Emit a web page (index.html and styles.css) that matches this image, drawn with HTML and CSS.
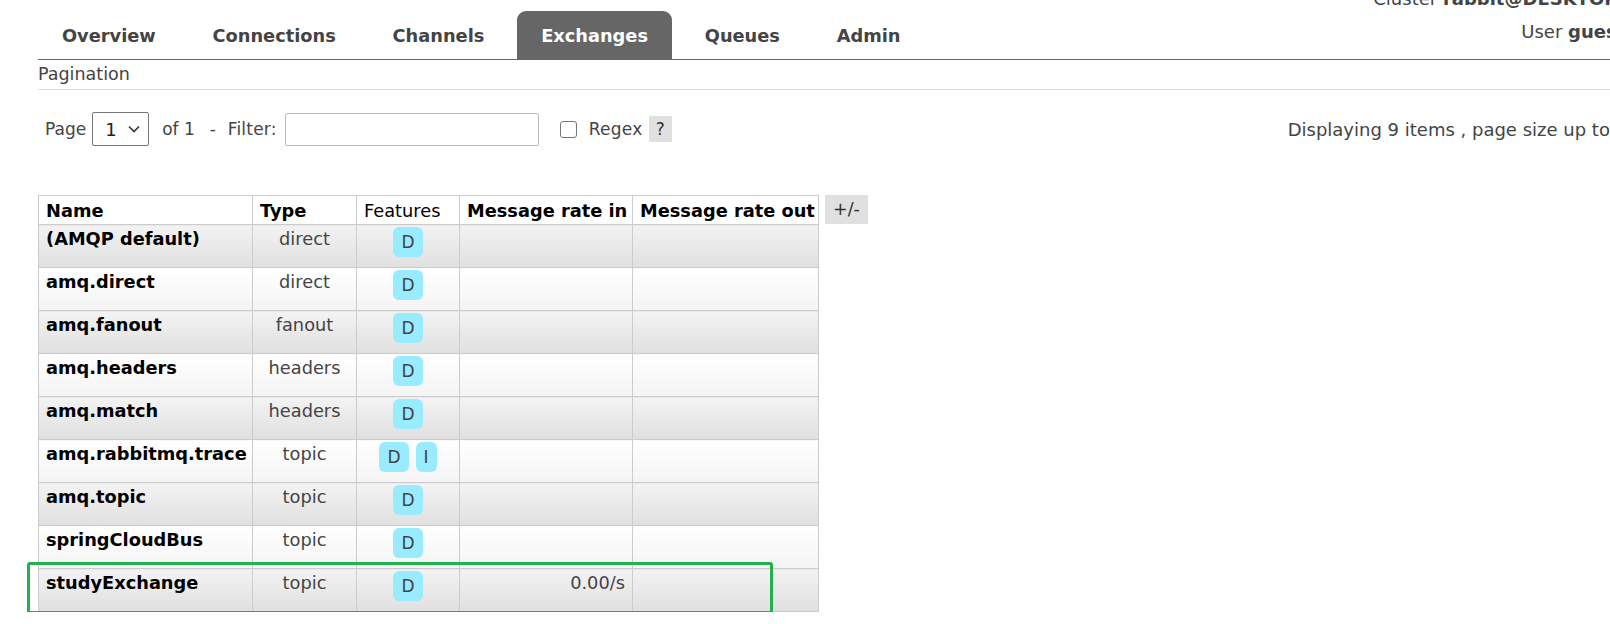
FILE: index.html
```html
<!DOCTYPE html>
<html>
<head>
  <title>RabbitMQ Management - Exchanges</title>
  <link rel="stylesheet" href="styles.css">
</head>
<body>
  <div class="page">
    <!-- top navigation -->
    <div class="topbar">
      <ul class="tabs">
        <li><a>Overview</a></li>
        <li><a>Connections</a></li>
        <li><a>Channels</a></li>
        <li class="active"><a>Exchanges</a></li>
        <li><a>Queues</a></li>
        <li><a>Admin</a></li>
      </ul>
      <div class="topinfo">
        <div class="cluster">Cluster <b>rabbit@DESKTOP-4NQ8GRL</b></div>
        <div class="user">User <b>guest</b></div>
      </div>
    </div>

    <h2 class="section">Pagination</h2>

    <div class="pager">
      <span class="lbl">Page</span>
      <span class="select">1
        <svg width="14" height="10" viewBox="0 0 14 10"><path d="M2 2.5 L7 7.5 L12 2.5" fill="none" stroke="#333" stroke-width="1.6"/></svg>
      </span>
      <span class="lbl of">of 1</span>
      <span class="lbl filter">- Filter:</span>
      <span class="input"></span>
      <span class="check"></span>
      <span class="lbl regex">Regex</span>
      <span class="help">?</span>
      <span class="count">Displaying 9 items , page size up to 100</span>
    </div>

    <div class="list-wrap">
      <table class="list">
        <colgroup>
          <col class="c-name"><col class="c-type"><col class="c-feat"><col class="c-in"><col class="c-out">
        </colgroup>
        <thead>
          <tr>
            <th>Name</th>
            <th>Type</th>
            <th class="plain">Features</th>
            <th>Message rate in</th>
            <th>Message rate out</th>
          </tr>
        </thead>
        <tbody>
          <tr class="alt1"><td class="name">(AMQP default)</td><td class="type">direct</td><td class="feat"><span class="badge">D</span></td><td></td><td></td></tr>
          <tr class="alt2"><td class="name">amq.direct</td><td class="type">direct</td><td class="feat"><span class="badge">D</span></td><td></td><td></td></tr>
          <tr class="alt1"><td class="name">amq.fanout</td><td class="type">fanout</td><td class="feat"><span class="badge">D</span></td><td></td><td></td></tr>
          <tr class="alt2"><td class="name">amq.headers</td><td class="type">headers</td><td class="feat"><span class="badge">D</span></td><td></td><td></td></tr>
          <tr class="alt1"><td class="name">amq.match</td><td class="type">headers</td><td class="feat"><span class="badge">D</span></td><td></td><td></td></tr>
          <tr class="alt2"><td class="name">amq.rabbitmq.trace</td><td class="type">topic</td><td class="feat"><span class="badge">D</span><span class="badge">I</span></td><td></td><td></td></tr>
          <tr class="alt1"><td class="name">amq.topic</td><td class="type">topic</td><td class="feat"><span class="badge">D</span></td><td></td><td></td></tr>
          <tr class="alt2"><td class="name">springCloudBus</td><td class="type">topic</td><td class="feat"><span class="badge">D</span></td><td></td><td></td></tr>
          <tr class="alt1"><td class="name">studyExchange</td><td class="type">topic</td><td class="feat"><span class="badge">D</span></td><td class="rate">0.00/s</td><td></td></tr>
        </tbody>
      </table>
      <span class="toggle">+/-</span>
      <!-- hand drawn highlight -->
      <div class="highlight"></div>
    </div>
  </div>
</body>
</html>
```

FILE: styles.css
```css
body {
  margin: 0;
  background: #fff;
  font-family: "DejaVu Sans", Verdana, sans-serif;
  color: #444;
  overflow: hidden;
}

.page {
  width: 1900px;
  padding-left: 38px;
}

/* top navigation */
.topbar {
  display: flex;
  align-items: flex-end;
  height: 59px;
  border-bottom: 1px solid #666;
}

.tabs {
  display: flex;
  list-style: none;
  margin: 0;
  padding: 0;
}

.tabs li {
  margin-right: 8.8px;
}

.tabs a {
  display: block;
  height: 48px;
  line-height: 49px;
  padding: 0 24px;
  font-size: 17.8px;
  font-weight: bold;
  color: #444;
  border-radius: 9px 9px 0 0;
}

.tabs li.active a {
  background: #666;
  color: #fff;
}

.topinfo {
  align-self: flex-start;
  margin-top: -12px;
  margin-left: 440px;
  font-size: 18px;
  line-height: 21px;
}

.topinfo .user {
  margin-top: 12px;
  margin-left: 148px;
}

.section {
  margin: 0;
  padding: 4px 0;
  font-size: 17.5px;
  font-weight: normal;
  line-height: 21px;
  color: #444;
  border-bottom: 1px solid #ddd;
}

/* pagination row */
.pager {
  display: flex;
  align-items: center;
  height: 34px;
  margin-top: 22px;
  font-size: 17px;
  white-space: nowrap;
}

.pager .lbl {
  margin-left: 7px;
}

.select {
  display: flex;
  align-items: center;
  justify-content: space-between;
  box-sizing: border-box;
  width: 57px;
  height: 34px;
  margin-left: 6px;
  padding: 0 7px 0 12px;
  border: 1px solid #767676;
  border-radius: 2px;
  font-size: 18px;
  color: #222;
}

.pager .of { margin-left: 13px; }
.pager .filter { margin-left: 15px; word-spacing: 6px; letter-spacing: 0.2px; }

.input {
  box-sizing: border-box;
  width: 254px;
  height: 33px;
  margin-left: 8px;
  border: 1px solid #bbb;
  border-radius: 2px;
}

.check {
  box-sizing: border-box;
  width: 17px;
  height: 17px;
  margin-left: 21px;
  border: 1px solid #767676;
  border-radius: 3px;
}

.pager .regex { margin-left: 12px; letter-spacing: 0.3px; }

.help {
  width: 23px;
  height: 26px;
  line-height: 26px;
  margin-left: 6px;
  text-align: center;
  background: #e0e0e0;
  color: #333;
}

.count {
  margin-left: 616px;
  font-size: 18px;
}

/* exchanges table */
.list-wrap {
  position: relative;
  display: flex;
  align-items: flex-start;
  margin-top: 49px;
}

.list {
  table-layout: fixed;
  width: 781px;
  border-collapse: collapse;
  font-size: 17.8px;
  line-height: 20px;
}

.c-name { width: 214px; }
.c-type { width: 104px; }
.c-feat { width: 103px; }
.c-in   { width: 173px; }
.c-out  { width: 186px; }

.list th,
.list td {
  border: 1px solid #ccc;
  padding: 4px 7px;
  vertical-align: top;
  text-align: left;
  white-space: nowrap;
}

.list th {
  padding: 5px 7px 3px;
  background: #fff;
  color: #000;
  font-weight: bold;
}

.list th.plain {
  font-weight: normal;
}

.list td {
  box-sizing: border-box;
  height: 43px;
}

.list td.name {
  color: #000;
  font-weight: bold;
}

.list td.type {
  text-align: center;
}

.list td.feat {
  padding-top: 2px;
  font-size: 17px;
  text-align: center;
}

.list td.rate {
  text-align: right;
}

.alt1 td { background: linear-gradient(#f3f3f3, #e0e0e0); }
.alt2 td { background: linear-gradient(#fff, #f4f4f4); }

.badge {
  display: inline-block;
  padding: 5px 8px;
  line-height: 20px;
  border-radius: 6px;
  background: #99ebff;
  color: #444;
}

.badge + .badge {
  margin-left: 7px;
}

.toggle {
  margin-left: 6px;
  padding: 0 8px;
  height: 29px;
  line-height: 29px;
  font-size: 17.5px;
  background: #e0e0e0;
  color: #333;
}

.highlight {
  position: absolute;
  left: -11px;
  top: 367px;
  width: 740px;
  height: 46px;
  border: 3px solid #22b14c;
  border-radius: 3px;
}
```
